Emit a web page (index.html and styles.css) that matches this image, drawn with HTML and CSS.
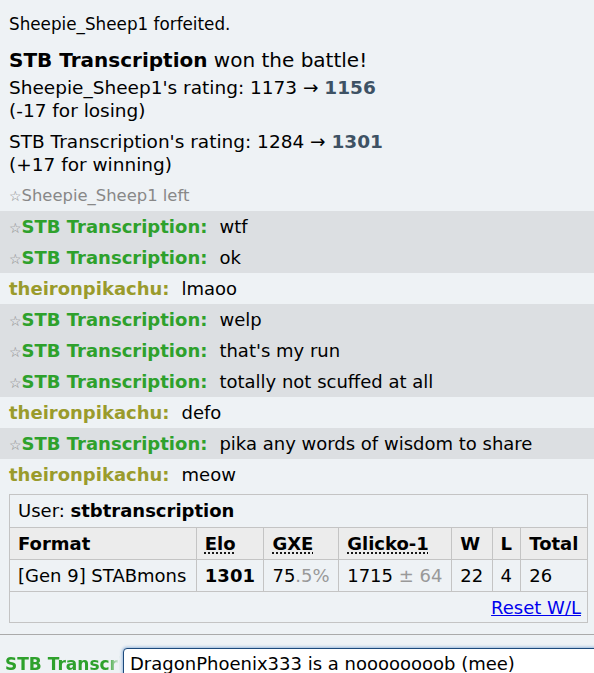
FILE: index.html
```html
<!DOCTYPE html>
<html lang="en">
<head>
    <meta charset="UTF-8">
    <title>Battle log</title>
    <link rel="stylesheet" href="styles.css">
</head>
<body>
    <div class="log">
        <div class="notice">Sheepie_Sheep1 forfeited.</div>
        <div class="result">
            <h2><strong>STB Transcription</strong> won the battle!</h2>
            <p>Sheepie_Sheep1's rating: 1173 &rarr; <strong class="new">1156</strong><br>(-17 for losing)</p>
            <p>STB Transcription's rating: 1284 &rarr; <strong class="new">1301</strong><br>(+17 for winning)</p>
        </div>
        <div class="left"><span class="star">☆</span>Sheepie_Sheep1 left</div>

        <div class="chat dark"><span class="star">☆</span><strong class="green">STB Transcription:</strong><em>wtf</em></div>
        <div class="chat dark"><span class="star">☆</span><strong class="green">STB Transcription:</strong><em>ok</em></div>
        <div class="chat"><strong class="olive">theironpikachu:</strong><em>lmaoo</em></div>
        <div class="chat dark"><span class="star">☆</span><strong class="green">STB Transcription:</strong><em>welp</em></div>
        <div class="chat dark"><span class="star">☆</span><strong class="green">STB Transcription:</strong><em>that's my run</em></div>
        <div class="chat dark"><span class="star">☆</span><strong class="green">STB Transcription:</strong><em>totally not scuffed at all</em></div>
        <div class="chat"><strong class="olive">theironpikachu:</strong><em>defo</em></div>
        <div class="chat dark"><span class="star">☆</span><strong class="green">STB Transcription:</strong><em>pika any words of wisdom to share</em></div>
        <div class="chat"><strong class="olive">theironpikachu:</strong><em>meow</em></div>

        <div class="ratings">
            <div class="user">User: <strong>stbtranscription</strong></div>
            <table>
                <tr>
                    <th>Format</th>
                    <th><abbr>Elo</abbr></th>
                    <th><abbr>GXE</abbr></th>
                    <th><abbr>Glicko-1</abbr></th>
                    <th>W</th>
                    <th>L</th>
                    <th>Total</th>
                </tr>
                <tr>
                    <td>[Gen 9] STABmons</td>
                    <td><strong>1301</strong></td>
                    <td>75<span class="dim">.5%</span></td>
                    <td>1715<span class="dim"> &plusmn; 64</span></td>
                    <td>22</td>
                    <td>4</td>
                    <td>26</td>
                </tr>
            </table>
            <div class="reset"><a href="#">Reset W/L</a></div>
        </div>
    </div>

    <div class="chatbox">
        <div class="me">STB Transcription</div>
        <div class="input">DragonPhoenix333 is a <span class="typo">noooooooob</span> (mee)</div>
    </div>
</body>
</html>
```

FILE: styles.css
```css
* {
    margin: 0;
    padding: 0;
    box-sizing: border-box;
}

body {
    font-family: "DejaVu Sans", Verdana, sans-serif;
    font-size: 18px;
    background-color: #eef2f5;
    color: #000;
    height: 673px;
    overflow: hidden;
}

/* Battle log */
.log {
    height: 635px;
    border-bottom: 1px solid #aaa;
    overflow: hidden;
}

.notice {
    padding: 12px 9px 0;
    font-size: 16.8px;
    line-height: 24px;
}

.result {
    padding: 0 9px;
}

.result h2 {
    font-size: 20px;
    font-weight: normal;
    line-height: 28px;
    margin-top: 10px;
}

.result p {
    font-size: 18.5px;
    line-height: 23px;
    margin-bottom: 8px;
}

.result p:first-of-type {
    margin-top: 2px;
}

.new {
    color: #3e5264;
}

.left {
    color: #888;
    font-size: 16.4px;
    padding: 0 9px;
    height: 24px;
    line-height: 24px;
    margin-bottom: 3px;
}

.star {
    font-size: 14px;
    line-height: 1;
    color: #888;
}

/* Chat rows */
.chat {
    height: 31px;
    padding: 3px 9px;
    line-height: 25px;
    white-space: nowrap;
}

.chat.dark {
    background-color: #dcdfe2;
}

.chat em {
    font-style: normal;
    margin-left: 12px;
}

.green {
    color: #2ea12c;
}

.olive {
    color: #9a9b2c;
}

/* Ratings box */
.ratings {
    margin: 4px 6px 0 9px;
    border: 1px solid #c4c4c4;
}

.user {
    padding: 0 8px;
    height: 32px;
    line-height: 32px;
}

table {
    width: 100%;
    border-collapse: collapse;
}

th, td {
    border: 1px solid #c4c4c4;
    padding: 0 8px;
    text-align: left;
    height: 32px;
    white-space: nowrap;
}

tr th:first-child,
tr td:first-child {
    border-left: none;
}

tr th:last-child,
tr td:last-child {
    border-right: none;
}

th {
    background-color: #ececec;
}

abbr {
    text-decoration: underline dotted;
    text-underline-offset: 3px;
}

.dim {
    color: #999;
}

.reset {
    text-align: right;
    padding: 5px 6px 4px;
    line-height: 21px;
}

.reset a {
    color: #0000ee;
}

/* Message input */
.chatbox {
    display: flex;
    align-items: flex-start;
    padding-top: 13px;
}

.me {
    flex: none;
    width: 123px;
    padding: 6px 0 0 5px;
    color: #2ea12c;
    font-size: 17px;
    font-weight: bold;
    white-space: nowrap;
    overflow: hidden;
    -webkit-mask-image: linear-gradient(to right, #000 108px, transparent 120px);
    mask-image: linear-gradient(to right, #000 108px, transparent 120px);
}

.input {
    flex: none;
    width: 490px;
    height: 40px;
    background-color: #fff;
    border: 1px solid #1d4a7c;
    border-radius: 4px;
    box-shadow: 0 0 3px 1px #9ab9dc;
    padding: 3px 6px;
    line-height: 24px;
    white-space: nowrap;
}

.typo {
    text-decoration: underline wavy #e02020;
    text-decoration-thickness: 1px;
    text-underline-offset: 4px;
}
```
